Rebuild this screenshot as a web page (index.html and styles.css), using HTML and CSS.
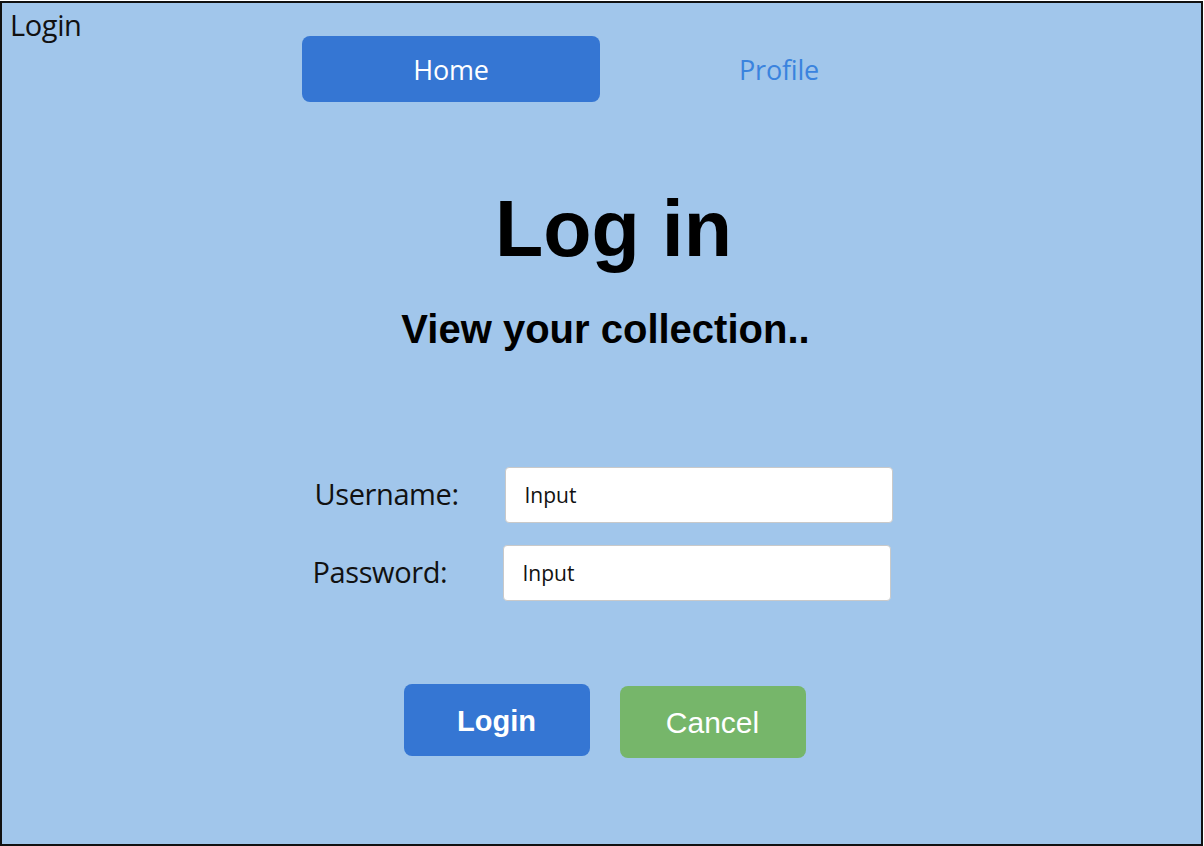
FILE: index.html
```html
<!DOCTYPE html>
<html>
<head>
<meta charset="utf-8">
<link rel="stylesheet" href="styles.css">
</head>
<body>
<div class="frame">
  <div class="top">
    <div class="page-label">Login</div>
    <nav class="nav">
      <a class="nav-item active">Home</a>
      <a class="nav-item">Profile</a>
    </nav>
  </div>
  <h1 class="title">Log in</h1>
  <h2 class="subtitle">View your collection..</h2>
  <form class="form">
    <div class="row">
      <label class="label">Username:</label>
      <div class="input">Input</div>
    </div>
    <div class="row row-2">
      <label class="label">Password:</label>
      <div class="input">Input</div>
    </div>
  </form>
  <div class="actions">
    <div class="btn btn-login">Login</div>
    <div class="btn btn-cancel">Cancel</div>
  </div>
</div>
</body>
</html>
```

FILE: styles.css
```css
* { box-sizing: border-box; }
html, body { margin: 0; padding: 0; background: #ffffff; }
body { width: 1204px; height: 846px; }

.frame {
  width: 1203px;
  height: 845px;
  margin: 1px 0 0 0;
  border: 2px solid #111;
  background: #a1c6eb;
  display: flex;
  flex-direction: column;
  align-items: center;
  font-family: "Open Sans", "Noto Sans", sans-serif;
}

.top {
  width: 100%;
  display: flex;
  align-items: flex-start;
  height: 99px;
}

.page-label {
  width: 300px;
  padding: 3px 0 0 8px;
  font-size: 29px;
  line-height: 38px;
  color: #111;
  letter-spacing: -0.4px;
}

.nav {
  display: flex;
  gap: 30px;
  margin-top: 33px;
}

.nav-item {
  width: 298px;
  height: 66px;
  display: flex;
  align-items: center;
  justify-content: center;
  font-size: 27px;
  color: #3a83de;
  border-radius: 8px;
  letter-spacing: -0.2px;
}

.nav-item.active {
  background: #3576d3;
  color: #ffffff;
}

.title {
  margin: 87px 0 0 24px;
  font-family: "Liberation Sans", Arial, sans-serif;
  font-weight: bold;
  font-size: 79px;
  line-height: 80px;
  color: #000;
}

.subtitle {
  margin: 40px 0 0 8px;
  font-family: "Liberation Sans", Arial, sans-serif;
  font-weight: bold;
  font-size: 40px;
  line-height: 40px;
  color: #000;
}

.form {
  margin: 118px 0 0 4px;
  display: flex;
  flex-direction: column;
  gap: 22px;
}

.row {
  display: flex;
  align-items: center;
}

.row-2 { margin-left: -2px; }

.label {
  width: 190px;
  font-size: 29px;
  line-height: 36px;
  padding-bottom: 3px;
  color: #111;
  letter-spacing: -0.4px;
}

.input {
  width: 388px;
  height: 56px;
  background: #ffffff;
  border: 1px solid #c9c9c9;
  border-radius: 4px;
  padding-left: 19px;
  display: flex;
  align-items: center;
  font-size: 21px;
  color: #111;
}

.actions {
  margin: 83px 0 0 6px;
  display: flex;
  gap: 30px;
  align-items: flex-start;
}

.btn {
  width: 186px;
  height: 72px;
  border-radius: 8px;
  display: flex;
  align-items: center;
  justify-content: center;
  font-family: "Liberation Sans", Arial, sans-serif;
  font-size: 30px;
  color: #fff;
}

.btn-login {
  background: #3576d3;
  font-weight: bold;
  font-size: 29px;
  padding-top: 3px;
}

.btn-cancel {
  background: #76b66a;
  margin-top: 2px;
  padding-top: 2px;
}
```
